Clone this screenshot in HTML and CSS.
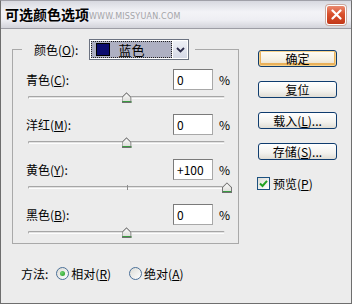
FILE: index.html
```html
<!DOCTYPE html>
<html lang="zh-CN">
<head>
<meta charset="utf-8">
<title>可选颜色选项</title>
<link rel="stylesheet" href="styles.css">
</head>
<body>
<div class="window">
  <div class="titlebar">
    <span class="title">可选颜色选项</span>
    <span class="wm">WWW.MISSYUAN.COM</span>
    <button class="close" aria-label="关闭">
      <svg width="11" height="11" viewBox="0 0 11 11"><path d="M1.5 1.5 L9.5 9.5 M9.5 1.5 L1.5 9.5" stroke="#fff" stroke-width="2.2" stroke-linecap="round"/></svg>
    </button>
  </div>
  <div class="body">
    <div class="main">
      <fieldset class="group">
        <legend class="legend">
          <span class="lbl">颜色(<u>O</u>):</span>
          <div class="select">
            <div class="sel-val"><span class="swatch"></span><span class="sel-text">蓝色</span></div>
            <div class="sel-arrow"><svg width="9" height="6" viewBox="0 0 9 6"><path d="M1 1 L4.5 4.5 L8 1" fill="none" stroke="#2b2b4a" stroke-width="1.8"/></svg></div>
          </div>
        </legend>

        <div class="row"><span class="lbl">青色(<u>C</u>):</span><input class="num" value="0"><span class="pct">%</span></div>
        <div class="slider"><span class="thumb" style="left:50%"></span></div>

        <div class="row"><span class="lbl">洋红(<u>M</u>):</span><input class="num" value="0"><span class="pct">%</span></div>
        <div class="slider"><span class="thumb" style="left:50%"></span></div>

        <div class="row"><span class="lbl">黄色(<u>Y</u>):</span><input class="num" value="+100"><span class="pct">%</span></div>
        <div class="slider"><span class="thumb" style="left:101%"></span></div>

        <div class="row"><span class="lbl">黑色(<u>B</u>):</span><input class="num" value="0"><span class="pct">%</span></div>
        <div class="slider last"><span class="thumb" style="left:50%"></span></div>
      </fieldset>

      <div class="side">
        <button class="btn default">确定</button>
        <button class="btn">复位</button>
        <button class="btn">载入(<u>L</u>)...</button>
        <button class="btn">存储(<u>S</u>)...</button>
        <label class="check"><span class="box"><svg width="9" height="9" viewBox="0 0 9 9"><path d="M1 4.5 L3.5 7 L8 1.8" fill="none" stroke="#21a121" stroke-width="2"/></svg></span><span>预览(<u>P</u>)</span></label>
      </div>
    </div>

    <div class="method">
      <span class="mlbl">方法:</span>
      <label class="radio"><span class="circle on"></span><span>相对(<u>R</u>)</span></label>
      <label class="radio"><span class="circle"></span><span>绝对(<u>A</u>)</span></label>
    </div>
  </div>
</div>
</body>
</html>
```

FILE: styles.css
```css
html, body {
  margin: 0;
  padding: 0;
  background: #ffffff;
}

.window {
  width: 352px;
  height: 304px;
  box-sizing: border-box;
  border: 1px solid #6e6e6e;
  border-top-color: #a0a0a8;
  background: #ececec;
  display: flex;
  flex-direction: column;
  font-family: "Noto Sans CJK SC", "Liberation Sans", sans-serif;
  font-size: 12px;
  color: #000;
}

.titlebar {
  height: 27px;
  flex: none;
  display: flex;
  align-items: center;
  padding: 0 5px 0 4px;
  background: linear-gradient(#d8d9e0, #f3f3f7 40%, #eeeef3 70%, #d2d3da);
  border-bottom: 1px solid #9d9da5;
}

.title {
  font-size: 14px;
  font-weight: bold;
  line-height: 16px;
  margin-top: -1px;
}

.wm {
  font-family: "DejaVu Sans", sans-serif;
  font-size: 8px;
  color: #a4a4a8;
  margin-left: 0;
  margin-top: 4px;
  letter-spacing: 0.2px;
}

.close {
  margin-left: auto;
  width: 20px;
  height: 20px;
  box-sizing: border-box;
  padding: 0;
  border: 1px solid #fff;
  border-radius: 3px;
  background: linear-gradient(#ea8a70, #d9502c 45%, #c2381a);
  box-shadow: 0 0 0 1px #c9a9a0;
  display: flex;
  align-items: center;
  justify-content: center;
}

.body {
  flex: 1;
  display: flex;
  flex-direction: column;
}

.main {
  display: flex;
  align-items: flex-start;
}

.group {
  margin: 10px 0 0 11px;
  width: 227px;
  box-sizing: border-box;
  min-inline-size: 0;
  border: 1px solid #a9a9a9;
  padding: 9px 7px 3px 9px;
}

.legend {
  display: flex;
  align-items: center;
  padding: 0 6px 0 12px;
  height: 21px;
}

.legend .lbl {
  margin-right: 11px;
}

.select {
  width: 100px;
  height: 21px;
  box-sizing: border-box;
  border: 1px solid #6b7280;
  background: #fff;
  display: flex;
  padding: 1px;
}

.sel-val {
  flex: 1;
  display: flex;
  align-items: center;
  background: #aeb0c2;
  outline: 1px dotted #222;
  outline-offset: -1px;
  margin-right: 1px;
}

.swatch {
  width: 14px;
  height: 13px;
  box-sizing: border-box;
  background: #0b0b6e;
  border: 1px solid #000;
  margin-left: 5px;
}

.sel-text {
  margin-left: 8px;
  font-size: 13px;
}

.sel-arrow {
  width: 14px;
  background: linear-gradient(#eef0f6, #d5d9e6);
  display: flex;
  align-items: center;
  justify-content: center;
}

.row {
  display: flex;
  align-items: center;
  height: 21px;
  padding-left: 4px;
}

.row .lbl {
  flex: 1;
}

.num {
  width: 40px;
  height: 21px;
  box-sizing: border-box;
  border: 1px solid #7a7a7a;
  border-right-color: #a8a8a8;
  border-bottom-color: #a8a8a8;
  background: #fff;
  padding: 0 3px;
  margin: 0;
  font-family: "Noto Sans CJK SC", "Liberation Sans", sans-serif;
  font-size: 12px;
  color: #000;
}

.pct {
  width: 12px;
  margin-left: 6px;
}

.slider {
  position: relative;
  height: 14px;
  margin: 1px 6px 9px 6px;
}

.slider.last {
  margin-bottom: 0;
}

.slider::before {
  content: "";
  position: absolute;
  left: 0;
  right: 0;
  top: 5px;
  height: 3px;
  box-sizing: border-box;
  border: 1px solid #a6a6a6;
  border-bottom-color: #fdfdfd;
  border-right-color: #e8e8e8;
  border-radius: 2px;
  background: #e2e2e2;
}

.slider::after {
  content: "";
  position: absolute;
  left: 50%;
  top: 4px;
  width: 1px;
  height: 5px;
  background: #8c8c8c;
}

.thumb {
  position: absolute;
  top: 1px;
  width: 10px;
  height: 11px;
  margin-left: -5px;
  z-index: 1;
  background:
    linear-gradient(#2f8f3a, #5cc05a) bottom / 100% 2px no-repeat,
    linear-gradient(#ffffff, #d8d8d4);
  clip-path: polygon(50% 0, 100% 45%, 100% 100%, 0 100%, 0 45%);
}

.thumb::before {
  content: "";
  position: absolute;
  inset: 0;
  background: #707070;
  clip-path: polygon(50% 0, 100% 45%, 100% 100%, 0 100%, 0 45%, 1px 45%, 1px calc(100% - 1px), calc(100% - 1px) calc(100% - 1px), calc(100% - 1px) calc(45% + 0.5px), 50% 1.5px, 1px calc(45% + 0.5px), 0 45%);
}

.side {
  margin: 21px 0 0 19px;
  display: flex;
  flex-direction: column;
  gap: 14px;
}

.btn {
  width: 79px;
  height: 17px;
  box-sizing: border-box;
  padding: 0;
  border: 1px solid #0f3c6e;
  border-radius: 3px;
  background: linear-gradient(#ffffff, #f3f2ee 60%, #e0ddd4);
  font-family: "Noto Sans CJK SC", "Liberation Sans", sans-serif;
  font-size: 12px;
  line-height: 14px;
  color: #000;
}

.btn.default {
  box-shadow: inset 0 0 0 1px #f6d28c, inset 0 -1px 0 2px #eab15a;
  background: linear-gradient(#fffdf6, #f4efe2 60%, #e6dcc6);
}

.check {
  display: flex;
  align-items: center;
  gap: 3px;
  margin-top: 3px;
  margin-left: -1px;
  height: 13px;
}

.box {
  width: 13px;
  height: 13px;
  box-sizing: border-box;
  border: 1px solid #1c5180;
  background: linear-gradient(135deg, #dcdcd6, #ffffff);
  display: flex;
  align-items: center;
  justify-content: center;
}

.method {
  display: flex;
  align-items: center;
  height: 16px;
  margin-top: 21px;
  padding-left: 20px;
}

.mlbl {
  margin-right: 8px;
}

.radio {
  display: flex;
  align-items: center;
  gap: 2px;
  margin-right: 18px;
}

.circle {
  width: 13px;
  height: 13px;
  box-sizing: border-box;
  border: 1px solid #4a6f98;
  border-radius: 50%;
  background: linear-gradient(135deg, #dcdcd6, #ffffff);
  display: flex;
  align-items: center;
  justify-content: center;
}

.circle.on::after {
  content: "";
  width: 5px;
  height: 5px;
  border-radius: 50%;
  background: radial-gradient(circle at 35% 35%, #6fd36f, #1f9a1f);
}
```
